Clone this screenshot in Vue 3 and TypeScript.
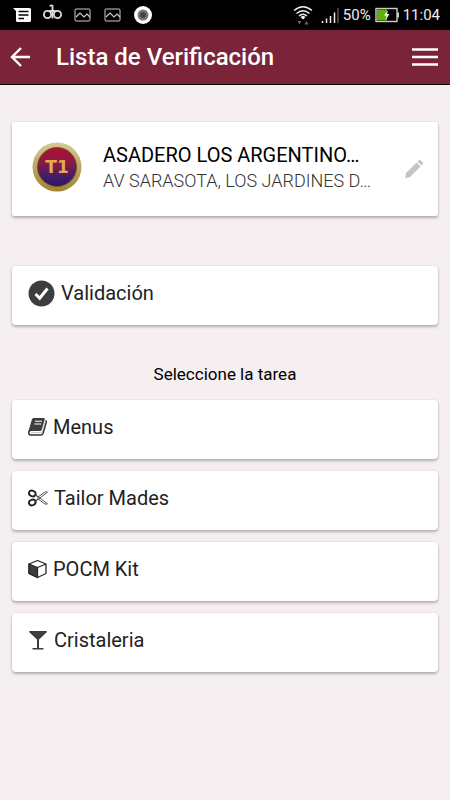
<script setup lang="ts">
import { ref } from 'vue'

interface Task {
  id: string
  label: string
}

const tasks = ref<Task[]>([
  { id: 'menus', label: 'Menus' },
  { id: 'tailor', label: 'Tailor Mades' },
  { id: 'kit', label: 'POCM Kit' },
  { id: 'glass', label: 'Cristaleria' },
])
</script>

<template>
  <div class="screen">
    <div class="status">
      <div class="notices">
        <svg width="18" height="18" viewBox="0 0 18 18" aria-hidden="true">
          <path d="M0 2h16.500q1.500 0 1.500 1.500v11q0 1.500-1.500 1.500h-12q-1.500 0-1.500-1.500V5z" fill="#fff" />
          <path d="M5.500 5.500h10M5.500 9h10M5.500 12.500h5.500" stroke="#000" stroke-width="1.500" />
        </svg>
        <svg width="19" height="22" viewBox="0 0 19 22" aria-hidden="true" fill="none" stroke="#ddd" stroke-width="1.800">
          <circle cx="4.500" cy="10.500" r="3.600" />
          <circle cx="14.500" cy="10.500" r="3.600" />
          <path d="M9.500 14.500V1M6.500 2L9.500 1M6.500 7h6" />
        </svg>
        <svg v-for="n in 2" :key="n" width="18" height="18" viewBox="0 0 18 18" aria-hidden="true" fill="none" stroke="#ccc">
          <rect x="1" y="3" width="15" height="12" rx="1" />
          <path d="M2 11l4-4 4 4 3-3 3 3" stroke-width="1.200" />
        </svg>
        <svg width="18" height="18" viewBox="0 0 18 18" aria-hidden="true">
          <circle cx="9" cy="9" r="9" fill="#fff" />
          <circle cx="9" cy="9" r="5.500" fill="#777" />
          <circle cx="9" cy="9" r="3" fill="#444" />
        </svg>
      </div>
      <div class="system">
        <svg width="20" height="20" viewBox="0 0 20 20" aria-hidden="true" fill="none" stroke="#eee" stroke-width="1.400">
          <path d="M1 5.500q9-7.500 18 0M3.500 8.500q6.500-5.500 13 0M6 11q4-3.500 8 0" />
          <path d="M7.500 12q2.500-2 5 0L10 14.500z" fill="#fff" stroke="none" />
          <path d="M4.500 16h4l-2 3.500zM11.500 19.500h4l-2-3.500z" fill="#666" stroke="none" />
        </svg>
        <svg width="18" height="18" viewBox="0 0 18 18" aria-hidden="true" stroke-width="1.500">
          <path d="M1.500 17v-2M5.500 17v-4.500M9.500 17v-7M13.500 17V6.500" stroke="#eee" />
          <path d="M17 17V2" stroke="#555" />
        </svg>
        <span class="percent">50%</span>
        <svg width="24" height="16" viewBox="0 0 24 16" aria-hidden="true">
          <rect x="1" y="1.500" width="21" height="13" fill="#000" stroke="#ccc" stroke-width="1.400" />
          <rect x="2" y="2.500" width="10" height="11" fill="#5fae0b" />
          <path d="M22 5.500h2v5h-2z" fill="#ccc" />
          <path d="M13 3l-4 5.500h2.500l-1 4.500 4-6h-2.500z" fill="#fff" />
        </svg>
        <span class="clock">11:04</span>
      </div>
    </div>

    <header class="bar">
      <button class="icon-button" type="button" aria-label="Volver">
        <svg width="20" height="20" viewBox="0 0 20 20" fill="none" stroke="#fff" stroke-width="2.400">
          <path d="M20 10H2M11 1L2 10l9 9" />
        </svg>
      </button>
      <h1>Lista de Verificación</h1>
      <button class="icon-button" type="button" aria-label="Menú">
        <svg width="26" height="20" viewBox="0 0 26 20" stroke="#fff" stroke-width="2.600">
          <path d="M0 2.500h26M0 10h26M0 17.500h26" />
        </svg>
      </button>
    </header>

    <main>
      <section class="card place">
        <svg class="badge" width="50" height="50" viewBox="0 0 50 50" role="img" aria-label="T1">
          <defs>
            <linearGradient id="gold" x1="0" y1="0" x2="0" y2="1">
              <stop offset="0" stop-color="#d5c997" />
              <stop offset="0.500" stop-color="#bda567" />
              <stop offset="1" stop-color="#a3822f" />
            </linearGradient>
            <linearGradient id="core" x1="0" y1="0" x2="0" y2="1">
              <stop offset="0" stop-color="#b80d33" />
              <stop offset="0.400" stop-color="#851b46" />
              <stop offset="0.800" stop-color="#3c1c6c" />
              <stop offset="1" stop-color="#321657" />
            </linearGradient>
          </defs>
          <circle cx="25" cy="25" r="24.500" fill="url(#gold)" />
          <circle cx="25" cy="25" r="19.500" fill="url(#core)" stroke="#705325" />
          <text x="25" y="31" text-anchor="middle" class="badge-text">T1</text>
        </svg>
        <div class="place-text">
          <h2>ASADERO LOS ARGENTINO…</h2>
          <p>AV SARASOTA, LOS JARDINES D…</p>
        </div>
        <button class="icon-button" type="button" aria-label="Editar">
          <svg width="18" height="18" viewBox="0 0 18 18" fill="#c4c4c4">
            <path d="M0 18l1-5L11.500 2.500l4 4L5 17zM12.500 1.500L14 0q.6-.5 1.200 0L18 2.800q.5.600 0 1.200l-1.500 1.500z" />
          </svg>
        </button>
      </section>

      <button class="card row validate" type="button">
        <svg width="27" height="27" viewBox="0 0 27 27" aria-hidden="true">
          <circle cx="13.500" cy="13.500" r="13" fill="#3d3d3f" />
          <path d="M7.500 14l4.200 4.200L19.500 8.500" fill="none" stroke="#fff" stroke-width="3" />
        </svg>
        <span>Validación</span>
      </button>

      <p class="prompt">Seleccione la tarea</p>

      <div class="tasks">
        <button v-for="task in tasks" :key="task.id" class="card row" type="button">
          <svg v-if="task.id === 'menus'" width="19" height="20" viewBox="0 0 19 20" aria-hidden="true">
            <path d="M5.500 1h10.200q1.500 0 1 1.500L13.800 12.500q-.5 1.500-2 1.500H3Q1.500 14 1 15.500L.8 13 3.800 2.800Q4.300 1 5.500 1z" fill="#3d3d3f" />
            <path d="M1.200 13.500Q-.2 18 3 18h10q1.500 0 2-1.500L18.200 5.500q.3-1.500-.7-2" fill="none" stroke="#333" stroke-width="1.500" />
            <path d="M3 15.700h9.800q1 0 1.500-1.200l2.700-9" fill="none" stroke="#999" stroke-width=".6" />
            <path d="M7 4.300h7M6.300 7h7" stroke="#fff" stroke-width="1.100" />
          </svg>
          <svg v-else-if="task.id === 'tailor'" width="20" height="20" viewBox="0 0 20 20" aria-hidden="true" fill="none">
            <ellipse cx="4.300" cy="5.500" rx="3.400" ry="2.700" transform="rotate(20 4.300 5.500)" stroke="#222224" stroke-width="1.900" />
            <ellipse cx="4.300" cy="14.500" rx="3.400" ry="2.700" transform="rotate(-20 4.300 14.500)" stroke="#222224" stroke-width="1.900" />
            <path d="M7 7l3 2 7-5q1.200-.5 2.500.2L9 12.200l-2.500 1.500M7 13l3-2 7 5q1.200.5 2.500-.2L9 7.800 6.500 6.300" stroke="#444" stroke-width=".9" />
            <circle cx="10" cy="10" r=".7" fill="#333" />
          </svg>
          <svg v-else-if="task.id === 'kit'" width="19" height="20" viewBox="0 0 19 20" aria-hidden="true" stroke="#29292b" stroke-width="1.300" stroke-linejoin="round">
            <path d="M9.500 1.500L18 5v9.500L9.500 18.500 1 14.500V5z" fill="#fff" />
            <path d="M1 5l8.500 3.500v10L1 14.500z" fill="#3d3d3f" />
            <path d="M9.500 8.500L18 5" fill="none" />
          </svg>
          <svg v-else width="20" height="20" viewBox="0 0 20 20" aria-hidden="true" fill="#3d3d3f">
            <path d="M1.500 1h17q.8.500 0 1.500L11 9.500V18h4.500v1.500h-11V18H9V9.500L1.500 2.500q-.8-1 0-1.500z" />
          </svg>
          <span>{{ task.label }}</span>
        </button>
      </div>
    </main>
  </div>
</template>

<style>
body {
  background: #f5eff1;
}
</style>

<style scoped>
.screen {
  min-height: 100vh;
  background: #f5eff1;
  color: #000;
  font-family: Roboto, "Liberation Sans", sans-serif;
}

h1,
h2,
p {
  margin: 0;
  font-weight: 400;
}

button {
  border: 0;
  font: inherit;
  color: inherit;
}

svg {
  display: block;
  flex: none;
}

.status {
  display: flex;
  align-items: center;
  justify-content: space-between;
  height: 30px;
  padding: 0 10px 0 13px;
  background: #000;
  color: #eee;
}

.notices {
  display: flex;
  align-items: center;
  gap: 12px;
}

.system {
  display: flex;
  align-items: center;
  gap: 4px;
}

.system svg:first-child {
  margin-right: 4px;
}

.percent,
.clock {
  font-size: 15px;
}

.bar {
  display: flex;
  align-items: center;
  height: 54px;
  padding: 0 12px 0 10px;
  border-bottom: 1px solid #000;
  background: #7b2338;
  color: #fff;
}

.bar h1 {
  flex: 1;
  margin-left: 26px;
  font-size: 24px;
  font-weight: 500;
}

.icon-button {
  padding: 0;
  background: none;
}

main {
  padding: 37px 12px 24px;
}

.card {
  border-radius: 4px;
  background: #fff;
  box-shadow: 0 2px 3px rgba(0, 0, 0, 0.26), 0 0 2px rgba(0, 0, 0, 0.12);
}

.place {
  display: flex;
  align-items: center;
  height: 94px;
  padding: 0 15px 0 20px;
  border-radius: 2px;
}

.badge,
.place-text {
  margin-bottom: 4px;
}

.place-text {
  flex: 1;
  min-width: 0;
  margin-left: 21px;
  white-space: nowrap;
}

.place h2 {
  font-size: 20px;
  line-height: 28px;
}

.place p {
  font-size: 18px;
  font-weight: 300;
  line-height: 24px;
  color: #333;
}

.badge-text {
  fill: #e5a94d;
  font-family: "DejaVu Sans", sans-serif;
  font-size: 17px;
  font-weight: 700;
}

.row {
  display: flex;
  align-items: center;
  gap: 6px;
  width: 100%;
  height: 59px;
  padding: 0 16px 5px;
  font-size: 20px;
  line-height: 24px;
  text-align: left;
  color: #222;
}

.validate {
  margin-top: 50px;
}

.prompt {
  padding: 37px 0 14px;
  font-size: 17px;
  line-height: 24px;
  text-align: center;
}

.tasks {
  display: grid;
  gap: 12px;
}
</style>
